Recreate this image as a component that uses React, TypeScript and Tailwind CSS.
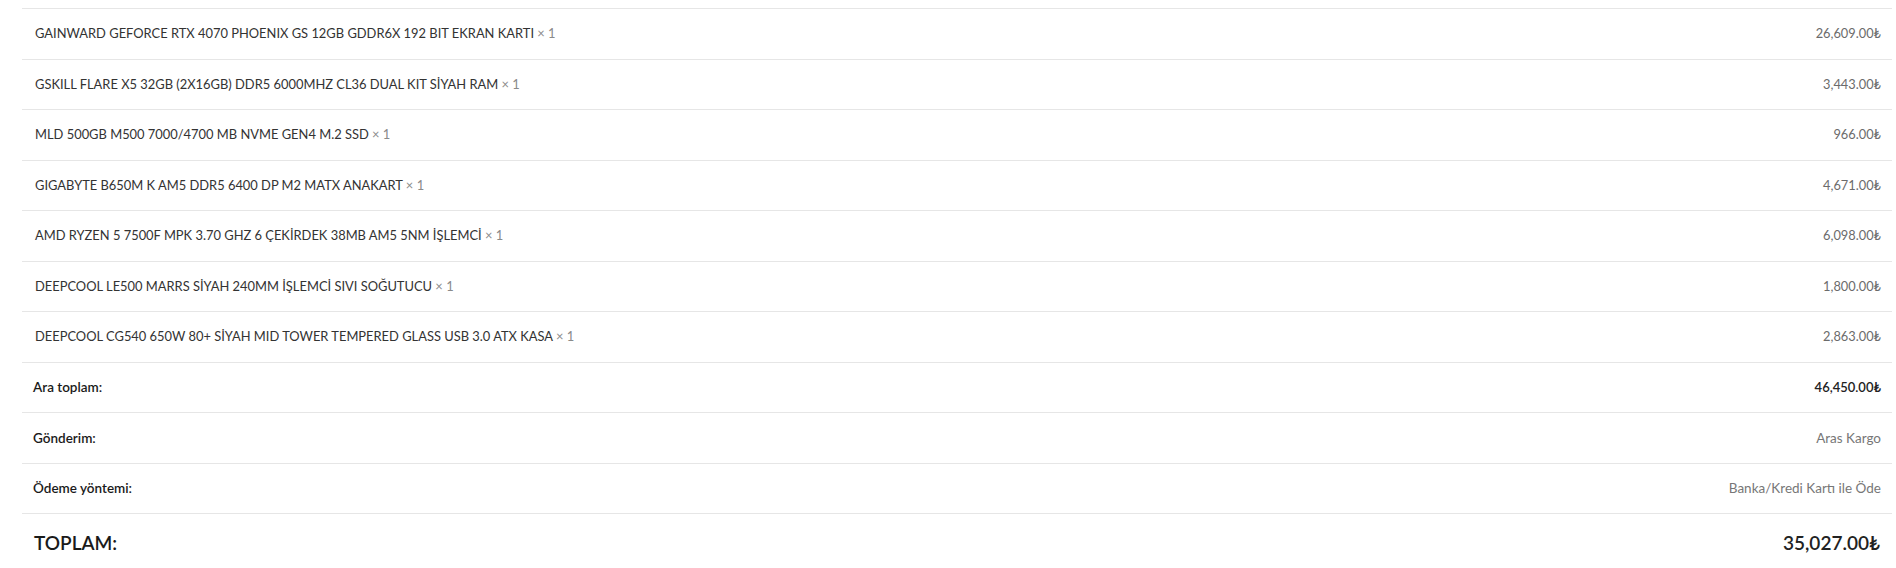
const items = [
    { name: "GAINWARD GEFORCE RTX 4070 PHOENIX GS 12GB GDDR6X 192 BIT EKRAN KARTI", qty: 1, price: "26,609.00₺" },
    { name: "GSKILL FLARE X5 32GB (2X16GB) DDR5 6000MHZ CL36 DUAL KIT SİYAH RAM", qty: 1, price: "3,443.00₺" },
    { name: "MLD 500GB M500 7000/4700 MB NVME GEN4 M.2 SSD", qty: 1, price: "966.00₺" },
    { name: "GIGABYTE B650M K AM5 DDR5 6400 DP M2 MATX ANAKART", qty: 1, price: "4,671.00₺" },
    { name: "AMD RYZEN 5 7500F MPK 3.70 GHZ 6 ÇEKİRDEK 38MB AM5 5NM İŞLEMCİ", qty: 1, price: "6,098.00₺" },
    { name: "DEEPCOOL LE500 MARRS SİYAH 240MM İŞLEMCİ SIVI SOĞUTUCU", qty: 1, price: "1,800.00₺" },
    { name: "DEEPCOOL CG540 650W 80+ SİYAH MID TOWER TEMPERED GLASS USB 3.0 ATX KASA", qty: 1, price: "2,863.00₺" },
];

export default function App() {
    return (
        <div className="min-h-[568px] bg-white pl-[22px] pr-[4px] pt-[8px] font-['Lato',sans-serif]">
            <div className="flex flex-col">
                {items.map((item) => (
                    <div
                        key={item.name}
                        className="flex h-[50.5px] items-center justify-between border-t border-[#e6e6e6] pl-[13px] pr-[11px] text-[12.9px]"
                    >
                        <span className="text-[#333333]">
                            {item.name} <span className="text-[#8a8a8a]">× {item.qty}</span>
                        </span>
                        <span className="text-[12.8px] text-[#6b6b6b]">{item.price}</span>
                    </div>
                ))}

                {/* summary rows */}
                <div className="flex h-[50.5px] items-center justify-between border-t border-[#e6e6e6] pl-[11px] pr-[11px]">
                    <span className="text-[13.5px] font-semibold text-[#1a1a1a]">Ara toplam:</span>
                    <span className="text-[13px] font-semibold text-[#222222]">46,450.00₺</span>
                </div>
                <div className="flex h-[50.5px] items-center justify-between border-t border-[#e6e6e6] pl-[11px] pr-[11px]">
                    <span className="text-[13.5px] font-semibold text-[#1a1a1a]">Gönderim:</span>
                    <span className="text-[13.5px] text-[#777777]">Aras Kargo</span>
                </div>
                <div className="flex h-[50.5px] items-center justify-between border-t border-[#e6e6e6] pl-[11px] pr-[11px]">
                    <span className="text-[13.5px] font-semibold text-[#1a1a1a]">Ödeme yöntemi:</span>
                    <span className="text-[13.5px] text-[#777777]">Banka/Kredi Kartı ile Öde</span>
                </div>
                <div className="flex h-[60px] items-center justify-between border-t border-[#e6e6e6] pl-[12px] pr-[12px]">
                    <span className="text-[19px] font-semibold text-[#1a1a1a]">TOPLAM:</span>
                    <span className="text-[19px] font-semibold text-[#222222]">35,027.00₺</span>
                </div>
            </div>
        </div>
    );
}
